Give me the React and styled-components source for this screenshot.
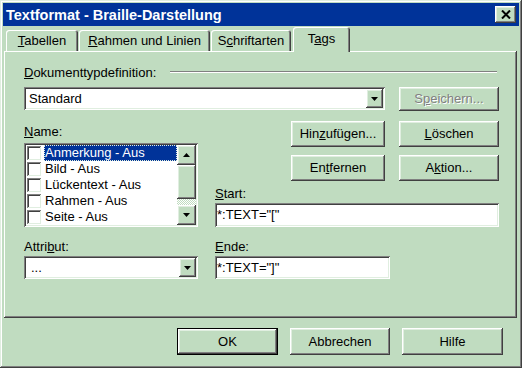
import styled, { createGlobalStyle, css } from "styled-components";

const FACE = "#c0dcc0";
const LIGHT = "#e0eee0";
const SHADOW = "#808080";
const DARK = "#404040";
const BLUE = "#003399";

const GlobalStyle = createGlobalStyle`
  html, body {
    margin: 0;
    padding: 0;
    background: ${FACE};
  }
  body {
    font-family: "Liberation Sans", Arial, sans-serif;
    font-size: 13px;
    color: #000;
    overflow: hidden;
  }
`;

const raised = css`
  box-shadow: inset -1px -1px ${DARK}, inset 1px 1px #fff,
    inset -2px -2px ${SHADOW}, inset 2px 2px ${LIGHT};
`;

const sunken = css`
  box-shadow: inset 1px 1px ${SHADOW}, inset -1px -1px #fff,
    inset 2px 2px ${DARK}, inset -2px -2px ${LIGHT};
`;

const Window = styled.div`
  width: 522px;
  height: 368px;
  box-sizing: border-box;
  padding: 3px;
  background: ${FACE};
  box-shadow: inset -1px -1px ${DARK}, inset 1px 1px ${LIGHT},
    inset -2px -2px ${SHADOW}, inset 2px 2px #fff;
  display: flex;
  flex-direction: column;
`;

const TitleBar = styled.div`
  height: 23px;
  background: ${BLUE};
  color: #fff;
  display: flex;
  align-items: center;
  padding: 0 3px 0 3px;
  font-weight: bold;
  font-size: 14.5px;
`;

const CloseButton = styled.div`
  margin-left: auto;
  width: 21px;
  height: 17px;
  background: ${FACE};
  ${raised};
  display: flex;
  align-items: center;
  justify-content: center;
`;

const TabStrip = styled.div`
  height: 25px;
  display: flex;
  align-items: flex-end;
  padding-left: 3px;
`;

const Tab = styled.div`
  box-sizing: border-box;
  width: ${(p) => p.$w}px;
  height: ${(p) => (p.$active ? 25 : 21)}px;
  margin-left: ${(p) => p.$ml || 0}px;
  margin-bottom: ${(p) => (p.$active ? -1 : 0)}px;
  position: relative;
  z-index: ${(p) => (p.$active ? 2 : 0)};
  background: ${FACE};
  border-radius: 3px 3px 0 0;
  box-shadow: inset 1px 1px #fff, inset -1px 0 ${DARK}, inset -2px 0 ${SHADOW};
  display: flex;
  justify-content: center;
  padding-top: ${(p) => (p.$active ? 4 : 3)}px;
  line-height: 16px;
`;

const Panel = styled.div`
  height: 267px;
  box-sizing: border-box;
  margin: 0 2px 0 1px;
  background: ${FACE};
  box-shadow: inset -1px -1px ${DARK}, inset 1px 1px #fff,
    inset -2px -2px ${SHADOW}, inset 2px 2px ${FACE};
  padding: 13px 18px 0 20px;
  display: flex;
  flex-direction: column;
`;

const HeadingRow = styled.div`
  height: 16px;
  display: flex;
  align-items: center;
`;

const EtchedLine = styled.div`
  flex: 1;
  height: 0;
  margin: 0 2px 0 14px;
  border-top: 1px solid ${SHADOW};
  border-bottom: 1px solid #fff;
`;

const Label = styled.div`
  line-height: 16px;
  height: 16px;
  margin-top: ${(p) => p.$mt || 0}px;
`;

const Row = styled.div`
  display: flex;
  align-items: flex-start;
  margin-top: ${(p) => p.$mt || 0}px;
  gap: ${(p) => p.$gap || 0}px;
  justify-content: ${(p) => p.$justify || "flex-start"};
`;

const Column = styled.div`
  display: flex;
  flex-direction: column;
  width: ${(p) => (p.$w ? `${p.$w}px` : "auto")};
  flex: ${(p) => (p.$w ? "none" : 1)};
`;

const Combo = styled.div`
  box-sizing: border-box;
  width: ${(p) => p.$w}px;
  height: 23px;
  background: #fff;
  ${sunken};
  display: flex;
  align-items: center;
  padding: 2px 2px 2px ${(p) => p.$pl || 5}px;
`;

const ComboText = styled.span`
  flex: 1;
  line-height: 16px;
`;

const DropButton = styled.div`
  width: 17px;
  height: 19px;
  background: ${FACE};
  ${raised};
  display: flex;
  align-items: center;
  justify-content: center;
`;

const Field = styled.div`
  box-sizing: border-box;
  width: ${(p) => (p.$w ? `${p.$w}px` : "100%")};
  height: ${(p) => p.$h || 23}px;
  background: #fff;
  ${sunken};
  padding: 0 2px;
  display: flex;
  align-items: center;
  line-height: 16px;
`;

const Button = styled.div`
  box-sizing: border-box;
  width: ${(p) => p.$w || 100}px;
  height: ${(p) => p.$h || 26}px;
  background: ${FACE};
  ${raised};
  ${(p) =>
    p.$default &&
    css`
      border: 1px solid #000;
    `}
  display: flex;
  align-items: center;
  justify-content: center;
  line-height: 16px;
  color: ${(p) => (p.$disabled ? SHADOW : "#000")};
  text-shadow: ${(p) => (p.$disabled ? "1px 1px #fff" : "none")};
`;

const ListBox = styled.div`
  box-sizing: border-box;
  width: 174px;
  height: 84px;
  margin-top: 3px;
  background: #fff;
  ${sunken};
  padding: 2px;
  display: flex;
`;

const Items = styled.div`
  flex: 1;
  display: flex;
  flex-direction: column;
`;

const Item = styled.div`
  height: 16px;
  display: flex;
  align-items: center;
`;

const CheckBox = styled.div`
  box-sizing: border-box;
  width: 14px;
  height: 14px;
  margin-left: 1px;
  background: #fff;
  box-shadow: inset 1px 1px ${SHADOW}, inset -1px -1px ${LIGHT},
    inset 2px 2px ${DARK};
`;

const ItemText = styled.div`
  flex: 1;
  margin-left: 3px;
  height: 16px;
  line-height: 16px;
  padding-left: 1px;
  background: ${(p) => (p.$selected ? BLUE : "transparent")};
  color: ${(p) => (p.$selected ? "#fff" : "#000")};
  outline: ${(p) => (p.$selected ? `1px dotted ${LIGHT}` : "none")};
  outline-offset: -1px;
`;

const ScrollBar = styled.div`
  width: 19px;
  display: flex;
  flex-direction: column;
`;

const ScrollButton = styled.div`
  height: ${(p) => p.$h}px;
  background: ${FACE};
  ${raised};
  display: flex;
  align-items: center;
  justify-content: center;
`;

const Track = styled.div`
  flex: 1;
  background: repeating-conic-gradient(#fff 0 25%, ${FACE} 0 50%) 0 0 / 2px 2px;
`;

const Footer = styled.div`
  display: flex;
  justify-content: flex-end;
  gap: 12px;
  padding: 10px 16px 0 0;
`;

function Arrow({ up }) {
  return (
    <svg width="7" height="4" viewBox="0 0 7 4">
      <path d={up ? "M3.5 0L7 4H0z" : "M0 0h7L3.5 4z"} fill="#000" />
    </svg>
  );
}

const items = ["Anmerkung - Aus", "Bild - Aus", "Lückentext - Aus", "Rahmen - Aus", "Seite - Aus"];

export default function App() {
  return (
    <>
      <GlobalStyle />
      <Window>
        <TitleBar>
          Textformat - Braille-Darstellung
          <CloseButton>
            <svg width="10" height="9" viewBox="0 0 10 9">
              <path d="M1 0.5L9 8.5M9 0.5L1 8.5" stroke="#000" strokeWidth="2" />
            </svg>
          </CloseButton>
        </TitleBar>
        <TabStrip>
          <Tab $w={72}>
            <span>
              <u>T</u>abellen
            </span>
          </Tab>
          <Tab $w={131} $ml={1}>
            <span>
              <u>R</u>ahmen und Linien
            </span>
          </Tab>
          <Tab $w={80} $ml={1}>
            <span>
              S<u>c</u>hriftarten
            </span>
          </Tab>
          <Tab $w={57} $ml={2} $active>
            <span>
              T<u>a</u>gs
            </span>
          </Tab>
        </TabStrip>
        <Panel>
          <HeadingRow>
            <span>
              <u>D</u>okumenttypdefinition:
            </span>
            <EtchedLine />
          </HeadingRow>
          <Row $mt={7} $justify="space-between">
            <Combo $w={361}>
              <ComboText>Standard</ComboText>
              <DropButton>
                <Arrow />
              </DropButton>
            </Combo>
            <Button $w={100} $h={24} $disabled>
              <span>
                S<u>p</u>eichern...
              </span>
            </Button>
          </Row>
          <Row $mt={10} $gap={17}>
            <Column $w={174}>
              <Label $mt={3}>
                <u>N</u>ame:
              </Label>
              <ListBox>
                <Items>
                  {items.map((text, i) => (
                    <Item key={text}>
                      <CheckBox />
                      <ItemText $selected={i === 0}>{text}</ItemText>
                    </Item>
                  ))}
                </Items>
                <ScrollBar>
                  <ScrollButton $h={20}>
                    <Arrow up />
                  </ScrollButton>
                  <ScrollButton $h={34} />
                  <Track />
                  <ScrollButton $h={20}>
                    <Arrow />
                  </ScrollButton>
                </ScrollBar>
              </ListBox>
            </Column>
            <Column>
              <Row $justify="flex-end" $gap={14}>
                <Button $w={94}>
                  <span>
                    Hin<u>z</u>ufügen...
                  </span>
                </Button>
                <Button $w={100}>
                  <span>
                    <u>L</u>öschen
                  </span>
                </Button>
              </Row>
              <Row $mt={8} $justify="flex-end" $gap={14}>
                <Button $w={94}>
                  <span>
                    En<u>t</u>fernen
                  </span>
                </Button>
                <Button $w={100}>
                  <span>
                    A<u>k</u>tion...
                  </span>
                </Button>
              </Row>
              <Label $mt={5}>
                <u>S</u>tart:
              </Label>
              <Field $h={24} style={{ marginTop: 1 }}>
                *:TEXT="["
              </Field>
            </Column>
          </Row>
          <Row $mt={12} $gap={17}>
            <Column $w={174}>
              <Label>
                Attri<u>b</u>ut:
              </Label>
              <Row $mt={1}>
                <Combo $w={174} $pl={7}>
                  <ComboText>...</ComboText>
                  <DropButton>
                    <Arrow />
                  </DropButton>
                </Combo>
              </Row>
            </Column>
            <Column>
              <Label>
                <u>E</u>nde:
              </Label>
              <Row $mt={1}>
                <Field $w={175}>*:TEXT="]"</Field>
              </Row>
            </Column>
          </Row>
        </Panel>
        <Footer>
          <Button $w={101} $h={27} $default>
            OK
          </Button>
          <Button $w={100} $h={27}>
            Abbrechen
          </Button>
          <Button $w={101} $h={27}>
            Hilfe
          </Button>
        </Footer>
      </Window>
    </>
  );
}
